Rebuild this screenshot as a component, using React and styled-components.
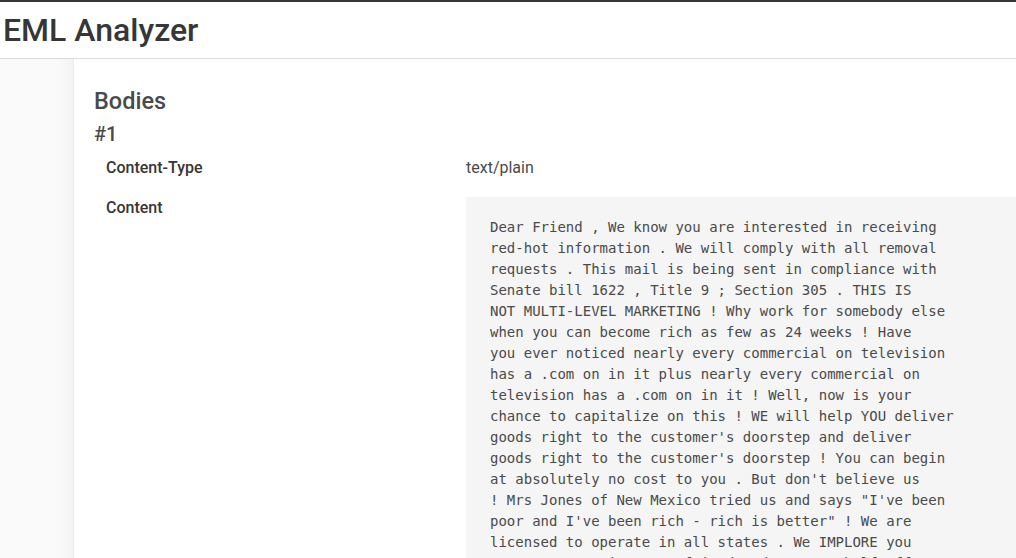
import styled, { createGlobalStyle } from 'styled-components';

const GlobalStyle = createGlobalStyle`
  html, body, #root {
    margin: 0;
    padding: 0;
    height: 100%;
    overflow: hidden;
  }
  body {
    font-family: Roboto, 'Liberation Sans', sans-serif;
    color: #363636;
    background: #fff;
    -webkit-font-smoothing: antialiased;
  }
`;

const TopBar = styled.header`
  box-sizing: border-box;
  height: 59px;
  border-top: 2px solid #363636;
  border-bottom: 1px solid #dbdbdb;
  display: flex;
  align-items: center;
  padding-left: 3px;
`;

const AppTitle = styled.h1`
  margin: 0;
  font-size: 32px;
  font-weight: 500;
  color: #363636;
  line-height: 1;
`;

const Layout = styled.div`
  display: flex;
  height: calc(100% - 59px);
`;

const Sidebar = styled.aside`
  width: 73px;
  flex-shrink: 0;
  background: linear-gradient(90deg, #fafafa 0%, #fafafa 80%, #f3f3f3 100%);
`;

const Main = styled.main`
  flex: 1;
  min-width: 0;
  background: #fff;
  border-left: 1px solid #ececec;
  padding: 27px 0 0 20px;
`;

const SectionTitle = styled.h2`
  margin: 0;
  font-size: 23.5px;
  font-weight: 500;
  line-height: 30px;
  color: #4a4a4a;
`;

const ItemTitle = styled.h3`
  margin: 5px 0 0;
  font-size: 20px;
  font-weight: 500;
  line-height: 26px;
  color: #4a4a4a;
`;

const Table = styled.div`
  display: grid;
  grid-template-columns: 360px 1fr;
  margin-top: 1px;
`;

const Label = styled.div`
  padding: 8px 12px;
  font-size: 16px;
  font-weight: 500;
  line-height: 24px;
  color: #363636;
`;

const Value = styled.div`
  padding: ${(p) => (p.$flush ? '9px 0 0 12px' : '8px 12px')};
  font-size: 16px;
  line-height: 24px;
  color: #4a4a4a;
`;

const Pre = styled.pre`
  margin: 0;
  background: #f5f5f5;
  color: #4a4a4a;
  font-family: 'DejaVu Sans Mono', 'Liberation Mono', monospace;
  font-size: 14px;
  line-height: 21px;
  padding: 20px 24px;
  white-space: pre;
  overflow: hidden;
`;

const body = `Dear Friend , We know you are interested in receiving
red-hot information . We will comply with all removal
requests . This mail is being sent in compliance with
Senate bill 1622 , Title 9 ; Section 305 . THIS IS
NOT MULTI-LEVEL MARKETING ! Why work for somebody else
when you can become rich as few as 24 weeks ! Have
you ever noticed nearly every commercial on television
has a .com on in it plus nearly every commercial on
television has a .com on in it ! Well, now is your
chance to capitalize on this ! WE will help YOU deliver
goods right to the customer's doorstep and deliver
goods right to the customer's doorstep ! You can begin
at absolutely no cost to you . But don't believe us
! Mrs Jones of New Mexico tried us and says "I've been
poor and I've been rich - rich is better" ! We are
licensed to operate in all states . We IMPLORE you
to act now ! Sign up a friend and you get half off !
Thank-you for your serious consideration of our offer .`;

export default function App() {
  return (
    <>
      <GlobalStyle />
      <TopBar>
        <AppTitle>EML Analyzer</AppTitle>
      </TopBar>
      <Layout>
        <Sidebar />
        <Main>
          <SectionTitle>Bodies</SectionTitle>
          <ItemTitle>#1</ItemTitle>
          <Table>
            <Label>Content-Type</Label>
            <Value>text/plain</Value>
            <Label>Content</Label>
            <Value $flush>
              <Pre>{body}</Pre>
            </Value>
          </Table>
        </Main>
      </Layout>
    </>
  );
}
